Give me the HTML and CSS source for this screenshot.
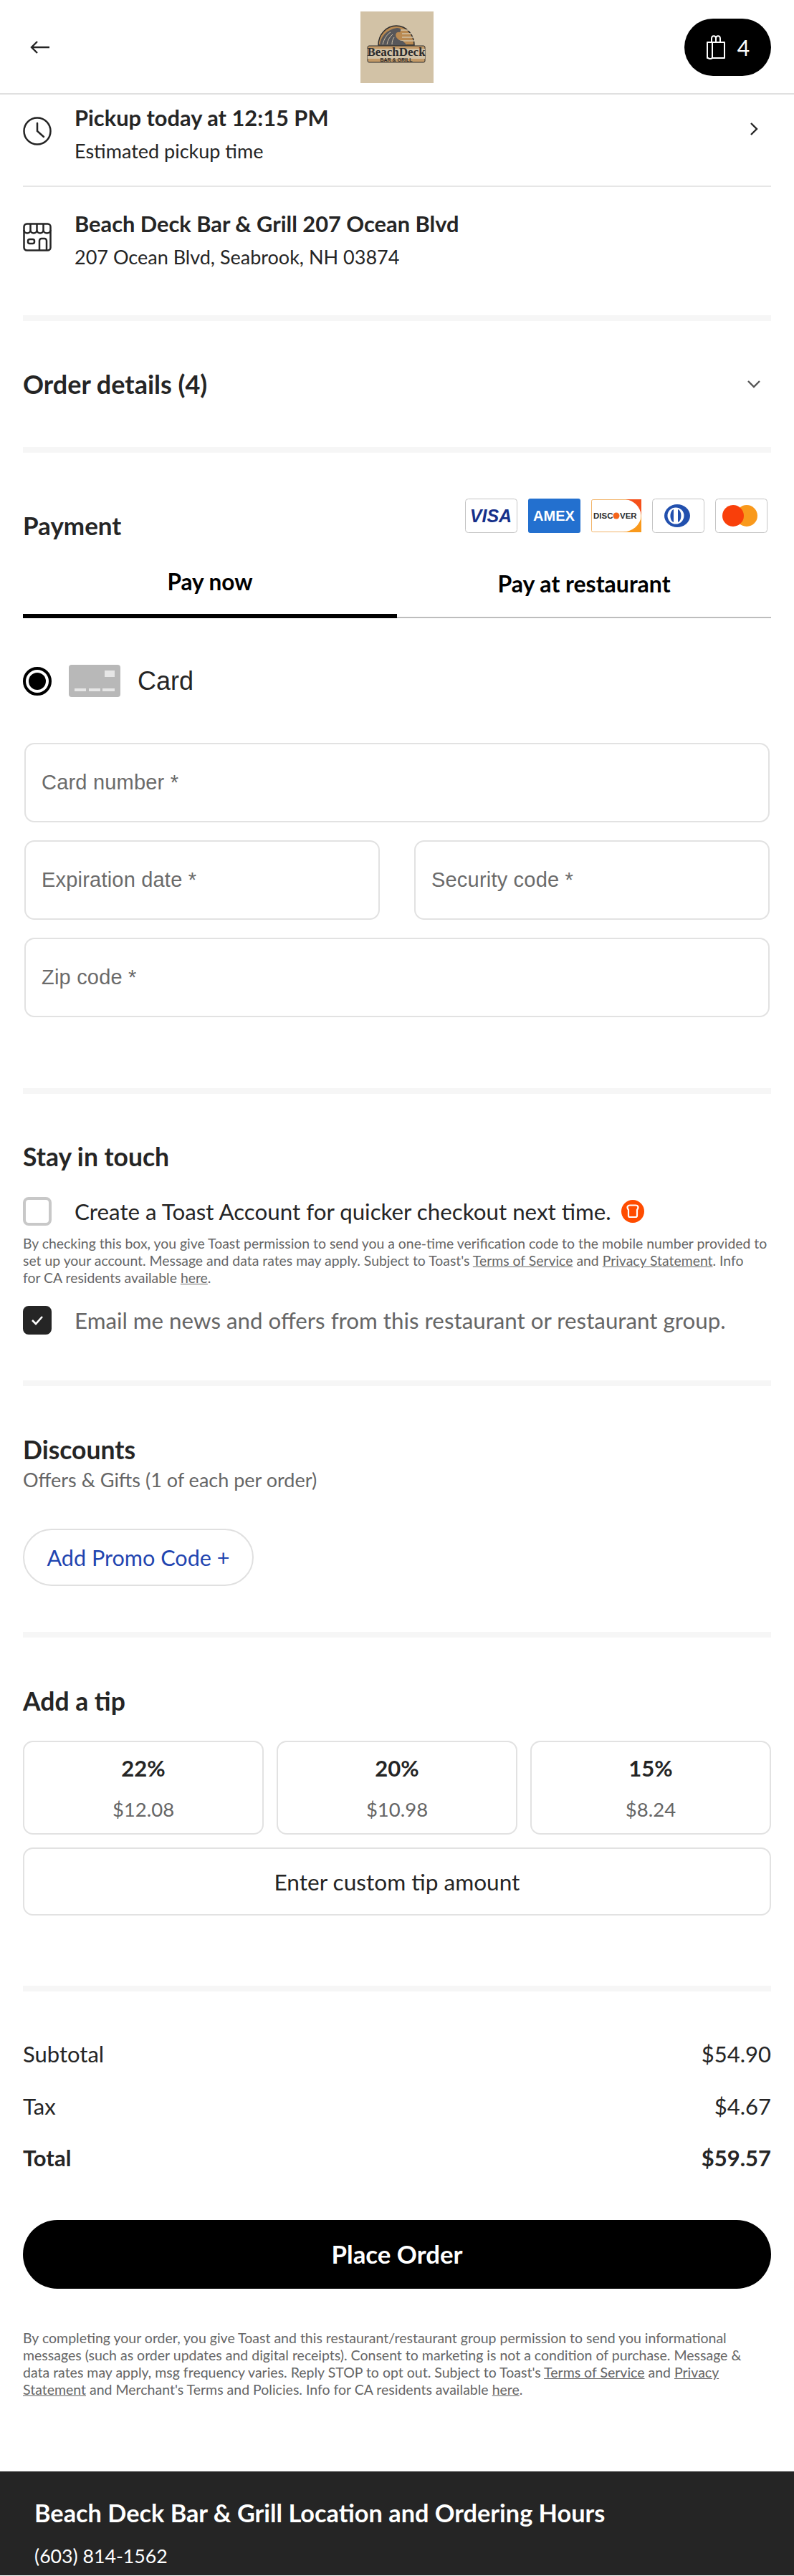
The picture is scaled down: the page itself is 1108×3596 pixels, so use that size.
FILE: index.html
```html
<!DOCTYPE html>
<html lang="en">
<head>
<meta charset="UTF-8">
<meta name="viewport" content="width=device-width, initial-scale=1.0">
<title>Checkout</title>
<link rel="stylesheet" href="styles.css">
</head>
<body>

<header class="top-bar">
    <svg class="back-icon" width="28" height="24" viewBox="0 0 28 24" fill="none" stroke="#252525" stroke-width="2.4"><path d="M27 12H2M10 4l-8 8 8 8"/></svg>
    <svg class="logo" width="102" height="100" viewBox="0 0 102 100">
        <rect width="102" height="100" fill="#d2c2a6"/>
        <path d="M25 47a25 27 0 0 1 50 0z" fill="#b98a52" stroke="#2c2c2e" stroke-width="1.5"/>
        <path d="M52 26h21M58 31h17M58 36h18M52 41h24" stroke="#d2c2a6" stroke-width="1.6"/>
        <path d="M27 47c1-12 10-22 24-24 6 0 6 3 4 6-5-1-7 3-5 7 2 3 5 5 9 5l6 6z" fill="#57575a"/>
        <path d="M31 46c2-8 6-14 11-17M37 46c1-6 4-11 8-14M44 46c0-4 1-7 3-10" stroke="#d2c2a6" stroke-width="1" fill="none"/>
        <rect x="10" y="48" width="80" height="23" rx="2" fill="#c49a67" stroke="#2c2c2e" stroke-width="1"/>
        <rect x="10" y="52" width="80" height="14" fill="#d2c2a6"/>
        <text x="50" y="62" class="logo-name" text-anchor="middle">BeachDeck</text>
        <text x="50" y="70" class="logo-sub" text-anchor="middle">BAR &amp; GRILL</text>
    </svg>
    <div class="cart-pill">
        <svg width="28" height="34" viewBox="0 0 28 34" fill="none" stroke="#fff" stroke-width="2"><path d="M2 10h24v22H9l-3 1.500-3-1.500H2zM9 10v22M8 10V5c0-5 6-5 6 0v5M14 10V5c0-5 6-5 6 0v5" stroke-linejoin="round"/></svg>
        <span>4</span>
    </div>
</header>

<main class="page">
    <div class="info-row first">
        <svg class="info-icon" width="40" height="40" viewBox="0 0 40 40" fill="none" stroke="#252525" stroke-width="2.500"><circle cx="20" cy="20" r="18.500"/><path d="M20 9v11l9 8" stroke-linecap="round"/></svg>
        <div class="info-text">
            <div class="info-title">Pickup today at 12:15 PM</div>
            <div class="info-sub">Estimated pickup time</div>
        </div>
        <svg class="info-arrow" width="14" height="22" viewBox="0 0 14 22" fill="none" stroke="#252525" stroke-width="2.400"><path d="M3 3l8 8-8 8"/></svg>
    </div>
    <div class="thin-line"></div>
    <div class="info-row second">
        <svg class="info-icon" width="40" height="40" viewBox="0 0 40 40" fill="none" stroke="#252525" stroke-width="2.500"><rect x="1.500" y="1.500" width="37" height="37" rx="4"/><path d="M1.500 10c0 6 9 6 9 0 0 6 9 6 9 0 0 6 9 6 9 0 0 6 10 6 10 0M10.500 10V2M19.500 10V2M28.500 10V2"/><rect x="7" y="23" width="9" height="6" rx="2.500"/><path d="M23 38V25a3 3 0 0 1 3-3h4a3 3 0 0 1 3 3v13"/></svg>
        <div class="info-text">
            <div class="info-title">Beach Deck Bar &amp; Grill 207 Ocean Blvd</div>
            <div class="info-sub">207 Ocean Blvd, Seabrook, NH 03874</div>
        </div>
    </div>

    <div class="section-line"></div>
    <div class="order-row">
        <h2>Order details (4)</h2>
        <svg width="22" height="14" viewBox="0 0 22 14" fill="none" stroke="#555" stroke-width="2.400"><path d="M3 3l8 8 8-8"/></svg>
    </div>
    <div class="section-line"></div>

    <div class="pay-head">
        <h2>Payment</h2>
        <div class="pay-cards">
            <svg class="pay-card" width="73" height="48" viewBox="0 0 73 48"><rect x=".5" y=".5" width="72" height="47" rx="4" fill="#fff" stroke="#c4c4c4"/><text x="36" y="33" class="card-visa" text-anchor="middle">VISA</text></svg>
            <svg class="pay-card" width="73" height="48" viewBox="0 0 73 48"><rect width="73" height="48" rx="3" fill="#2370cf"/><text x="36" y="31" class="card-amex" text-anchor="middle">AMEX</text></svg>
            <svg class="pay-card" width="70" height="46" viewBox="0 0 70 46"><rect x=".5" y=".5" width="69" height="45" rx="2" fill="#fff" stroke="#f2b56b"/><path d="M48 0h22v22C68 10 60 2 48 0z" fill="#f5501a"/><path d="M70 24v22H44c14-1 24-10 26-22z" fill="#f9991c"/><text x="3" y="27" class="card-disc">DISC</text><circle cx="35" cy="23" r="4.500" fill="#f5641a"/><text x="40" y="27" class="card-disc">VER</text></svg>
            <svg class="pay-card" width="73" height="48" viewBox="0 0 73 48"><rect x=".5" y=".5" width="72" height="47" rx="4" fill="#fff" stroke="#c4c4c4"/><ellipse cx="35" cy="24" rx="18" ry="16" fill="#2250ae"/><circle cx="33" cy="24" r="11.500" fill="#fff"/><path d="M30 15v18c-6-2-6-16 0-18zM36 15v18c6-2 6-16 0-18z" fill="#2250ae"/></svg>
            <svg class="pay-card" width="73" height="48" viewBox="0 0 73 48"><rect x=".5" y=".5" width="72" height="47" rx="4" fill="#fff" stroke="#c4c4c4"/><circle cx="44" cy="24" r="15" fill="#f9991c"/><circle cx="25" cy="24" r="15" fill="#f93f0a"/></svg>
        </div>
    </div>

    <div class="tabs">
        <div class="tab active">Pay now</div>
        <div class="tab">Pay at restaurant</div>
    </div>

    <div class="card-row">
        <span class="radio"><span class="radio-dot"></span></span>
        <svg width="72" height="45" viewBox="0 0 72 45"><rect width="72" height="45" rx="4" fill="#b8b8b8"/><rect x="50" y="8" width="14" height="9" fill="#e6e6e6"/><path d="M8 33h16v4H8zM28 33h16v4H28zM47 33h17v4H47z" fill="#e6e6e6"/></svg>
        <span class="card-label">Card</span>
    </div>

    <div class="card-form">
        <div class="field wide">Card number *</div>
        <div class="field">Expiration date *</div>
        <div class="field">Security code *</div>
        <div class="field wide">Zip code *</div>
    </div>

    <div class="section-line after-form"></div>

    <section class="touch">
        <h3>Stay in touch</h3>
        <div class="check-row">
            <span class="check"></span>
            <span class="check-label">Create a Toast Account for quicker checkout next time.</span>
            <svg class="toast-icon" width="32" height="32" viewBox="0 0 32 32"><circle cx="16" cy="16" r="16" fill="#ff4c00"/><path d="M10 14C7 10 9 7.500 12 7.500h8c3 0 5 2.500 2 6.500v8q0 2-2 2h-8q-2 0-2-2z" fill="none" stroke="#fff" stroke-width="2.200"/></svg>
        </div>
        <p class="fine check-note">By checking this box, you give Toast permission to send you a one-time verification code to the mobile number provided to set up your account. Message and data rates may apply. Subject to Toast's <a href="#">Terms of Service</a> and <a href="#">Privacy Statement</a>. Info<br>for CA residents available <a href="#">here</a>.</p>
        <div class="check-row second-check">
            <span class="check on"><svg width="20" height="16" viewBox="0 0 20 16" fill="none" stroke="#fff" stroke-width="2.600"><path d="M3 8l5 5 9-10"/></svg></span>
            <span class="check-label grey">Email me news and offers from this restaurant or restaurant group.</span>
        </div>
    </section>

    <div class="section-line touch-end"></div>

    <section class="discounts">
        <h3>Discounts</h3>
        <div class="offers">Offers &amp; Gifts (1 of each per order)</div>
        <button class="promo" type="button">Add Promo Code +</button>
    </section>

    <div class="section-line"></div>

    <section class="tip">
        <h3>Add a tip</h3>
        <div class="tip-grid">
            <div class="tip-box"><strong>22%</strong><span>$12.08</span></div>
            <div class="tip-box"><strong>20%</strong><span>$10.98</span></div>
            <div class="tip-box"><strong>15%</strong><span>$8.24</span></div>
        </div>
        <div class="tip-custom">Enter custom tip amount</div>
    </section>

    <div class="section-line"></div>

    <section class="totals">
        <div class="total-row"><span>Subtotal</span><span>$54.90</span></div>
        <div class="total-row"><span>Tax</span><span>$4.67</span></div>
        <div class="total-row bold"><span>Total</span><span>$59.57</span></div>
    </section>

    <button class="place-order" type="button">Place Order</button>

    <p class="fine legal">By completing your order, you give Toast and this restaurant/restaurant group permission to send you informational messages (such as order updates and digital receipts). Consent to marketing is not a condition of purchase. Message &amp; data rates may apply, msg frequency varies. Reply STOP to opt out. Subject to Toast's <a href="#">Terms of Service</a> and <a href="#">Privacy Statement</a> and Merchant's Terms and Policies. Info for CA residents available <a href="#">here</a>.</p>
</main>

<footer class="site-footer">
    <h4>Beach Deck Bar &amp; Grill Location and Ordering Hours</h4>
    <div class="phone">(603) 814-1562</div>
</footer>

</body>
</html>
```

FILE: styles.css
```css
* {
    box-sizing: border-box;
}
html, body {
    height: 3596px;
    overflow: hidden;
}
body {
    margin: 0;
    font-family: Lato, "Open Sans", sans-serif;
    color: #252525;
    background-color: #fff;
}
h2, h3, h4, p {
    margin: 0;
}
.top-bar {
    height: 132px;
    padding: 16px 32px 0 42px;
    border-bottom: 2px solid #e0e0e0;
    display: flex;
    justify-content: space-between;
    align-items: flex-start;
    position: relative;
}
.back-icon {
    margin-top: 38px;
}
.logo {
    position: absolute;
    left: 503px;
    top: 16px;
}
.logo-name {
    font-family: "Liberation Serif", serif;
    font-weight: 700;
    font-size: 17px;
    fill: #2c2c2e;
}
.logo-sub {
    font-family: "Liberation Sans", sans-serif;
    font-weight: 700;
    font-size: 7px;
    fill: #2c2c2e;
}
.cart-pill {
    width: 121px;
    height: 80px;
    margin-top: 10px;
    background-color: #000;
    border-radius: 40px;
    color: #fff;
    font-size: 30px;
    display: flex;
    align-items: center;
    justify-content: center;
    gap: 16px;
}
.page {
    padding: 0 32px;
}
.info-row {
    display: flex;
    align-items: center;
    position: relative;
}
.info-row.first {
    padding-top: 15px;
    padding-bottom: 32px;
}
.info-row.second {
    padding-top: 34px;
    padding-bottom: 65px;
}
.info-icon {
    flex: none;
    margin-top: -8px;
    margin-right: 32px;
}
.info-arrow {
    margin-left: auto;
    margin-right: 17px;
    margin-top: -14px;
}
.info-title {
    font-size: 30.800px;
    font-weight: 700;
    line-height: 36px;
}
.info-sub {
    font-size: 27px;
    line-height: 32px;
    margin-top: 12px;
}
.thin-line {
    height: 2px;
    background-color: #e6e6e6;
}
.section-line {
    height: 8px;
    background-color: #f6f6f6;
}
h2 {
    font-size: 36px;
    font-weight: 700;
    line-height: 40px;
}
h3 {
    font-size: 35.500px;
    font-weight: 700;
    line-height: 40px;
}
.order-row {
    height: 176px;
    display: flex;
    align-items: center;
    justify-content: space-between;
    padding-right: 13px;
}
.pay-head {
    padding-top: 64px;
    display: flex;
    justify-content: space-between;
    align-items: flex-end;
    padding-right: 5px;
}
.pay-head h2 {
    margin-bottom: -9px;
    font-size: 35px;
}
.pay-cards {
    display: flex;
    align-items: center;
    gap: 15px;
}
.card-visa {
    font-family: "Liberation Sans", sans-serif;
    font-weight: 700;
    font-style: italic;
    font-size: 25px;
    fill: #16308a;
}
.card-amex {
    font-family: "Liberation Sans", sans-serif;
    font-weight: 700;
    font-size: 20px;
    fill: #fff;
}
.card-disc {
    font-family: "Liberation Sans", sans-serif;
    font-weight: 700;
    font-size: 11.500px;
    fill: #2c2c2c;
}
.tabs {
    margin-top: 33px;
    display: flex;
    height: 86px;
}
.tab {
    flex: 1;
    font-size: 32px;
    font-weight: 700;
    text-align: center;
    color: #000;
    padding-top: 18px;
    border-bottom: 2px solid #bdbdbd;
}
.tab.active {
    border-bottom: 6px solid #000;
    padding-top: 16px;
    font-size: 31.500px;
}
.card-row {
    margin-top: 65px;
    height: 45px;
    display: flex;
    align-items: center;
    gap: 24px;
}
.radio {
    width: 40px;
    height: 40px;
    border: 4px solid #000;
    border-radius: 50%;
    display: flex;
    align-items: center;
    justify-content: center;
}
.radio-dot {
    width: 24px;
    height: 24px;
    border-radius: 50%;
    background-color: #000;
}
.card-label {
    font-family: "Liberation Sans", Arial, sans-serif;
    font-size: 36px;
}
.card-form {
    margin-top: 64px;
    padding: 0 2px;
    display: grid;
    grid-template-columns: 1fr 1fr;
    column-gap: 48px;
    row-gap: 25px;
}
.field {
    height: 111px;
    border: 2px solid #e2e2e2;
    border-radius: 14px;
    padding-left: 22px;
    display: flex;
    align-items: center;
    font-family: "Liberation Sans", Arial, sans-serif;
    font-size: 29px;
    letter-spacing: .2px;
    color: #6b6b6b;
}
.field.wide {
    grid-column: 1 / 3;
}
.section-line.after-form {
    margin-top: 99px;
}
.touch {
    padding-top: 68px;
}
.check-row {
    display: flex;
    align-items: center;
    margin-top: 36px;
}
.check {
    flex: none;
    width: 40px;
    height: 40px;
    border: 4px solid #c8c8c8;
    border-radius: 8px;
    margin-right: 32px;
    display: flex;
    align-items: center;
    justify-content: center;
}
.check.on {
    background-color: #252525;
    border-color: #252525;
}
.check-label {
    font-size: 31.300px;
    line-height: 40px;
}
.check-label.grey {
    color: #666;
}
.toast-icon {
    margin-left: 14px;
}
.fine {
    font-size: 19.500px;
    line-height: 24px;
    color: #666;
}
.fine a {
    color: #666;
}
.check-note {
    margin-top: 13px;
    font-size: 19.400px;
}
.second-check {
    margin-top: 27px;
}
.section-line.touch-end {
    margin-top: 64px;
}
.discounts {
    padding-top: 69px;
    padding-bottom: 64px;
}
.offers {
    font-size: 27px;
    line-height: 32px;
    color: #666;
    margin-top: 6px;
}
.promo {
    display: block;
    width: 322px;
    height: 80px;
    margin-top: 52px;
    border: 2px solid #e0e0e0;
    border-radius: 40px;
    background-color: #fff;
    font-family: inherit;
    font-size: 30.600px;
    color: #1f45b0;
}
.tip {
    padding-top: 69px;
    padding-bottom: 98px;
}
.tip-grid {
    margin-top: 35px;
    display: grid;
    grid-template-columns: repeat(3, 1fr);
    gap: 18px;
}
.tip-box {
    height: 131px;
    border: 2px solid #e2e2e2;
    border-radius: 14px;
    display: flex;
    flex-direction: column;
    align-items: center;
    padding-top: 18px;
}
.tip-box strong {
    font-size: 31px;
    line-height: 36px;
}
.tip-box span {
    margin-top: 24px;
    font-size: 27.500px;
    line-height: 32px;
    color: #666;
}
.tip-custom {
    margin-top: 18px;
    height: 95px;
    border: 2px solid #e2e2e2;
    border-radius: 14px;
    display: flex;
    align-items: center;
    justify-content: center;
    font-size: 31.600px;
}
.totals {
    padding-top: 67px;
}
.total-row {
    display: flex;
    justify-content: space-between;
    height: 72.500px;
    line-height: 40px;
    font-size: 31px;
}
.total-row.bold {
    font-weight: 700;
}
.place-order {
    display: block;
    width: 100%;
    height: 96px;
    margin-top: 34px;
    border: none;
    border-radius: 48px;
    background-color: #000;
    color: #fff;
    font-family: inherit;
    font-size: 34.800px;
    font-weight: 700;
}
.legal {
    margin-top: 57px;
}
.site-footer {
    margin-top: 102px;
    background-color: #252525;
    color: #fff;
    padding: 38px 48px 0;
    height: 145px;
}
.site-footer h4 {
    font-size: 34.300px;
    font-weight: 700;
    line-height: 40px;
}
.phone {
    margin-top: 24px;
    font-size: 26.700px;
    line-height: 32px;
}
```
